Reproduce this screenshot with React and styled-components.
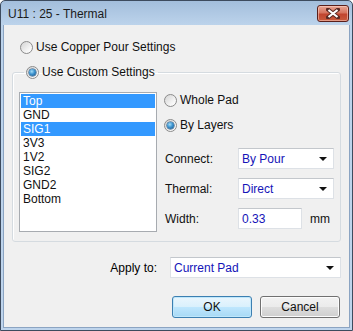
import React from "react";
import styled, { createGlobalStyle } from "styled-components";

const Global = createGlobalStyle`
  html, body { margin: 0; padding: 0; background: #ffffff; }
  body { font-family: "Liberation Sans", Arial, sans-serif; }
  * { box-sizing: border-box; }
`;

const Window = styled.div`
  width: 353px;
  height: 331px;
  border: 1px solid #3d4b5e;
  border-radius: 5px 5px 0 0;
  background: linear-gradient(#a3bedc 0px, #bcd3eb 24px, #bed4ec 100%);
  display: flex;
  flex-direction: column;
  overflow: hidden;
  font-family: "Liberation Sans", Arial, sans-serif;
  font-size: 12px;
  color: #000;
`;

const TitleBar = styled.div`
  height: 24px;
  display: flex;
  align-items: center;
  padding: 0 3px 0 7px;
  flex: none;
`;

const Title = styled.div`
  flex: 1;
  font-size: 12px;
  color: #1b1b1b;
  padding-top: 1px;
`;

const CloseButton = styled.div`
  width: 32px;
  height: 17px;
  margin-top: 1px;
  border: 1px solid #5a1f1a;
  border-radius: 3px;
  background: linear-gradient(#e8a593 0%, #d6745f 45%, #c1452f 55%, #c95a3c 100%);
  box-shadow: inset 0 0 0 1px rgba(255, 220, 210, 0.5);
  display: flex;
  align-items: center;
  justify-content: center;
`;

const Body = styled.div`
  flex: 1;
  margin: 0 2px 2px 2px;
  background: #f0f0f0;
  border: 1px solid #8ba4c2;
  border-top: none;
  display: flex;
  flex-direction: column;
  padding: 14px 8px 9px 8px;
`;

const RadioRow = styled.label`
  display: flex;
  align-items: center;
  height: 16px;
  gap: 3px;
  white-space: nowrap;
  color: #111;
  margin-left: ${(p) => p.$indent || 0}px;
`;

const RadioDot = styled.span`
  width: 13px;
  height: 13px;
  border-radius: 50%;
  border: 1px solid #8b8b8b;
  background: linear-gradient(135deg, #d4d4d4, #f6f6f6 70%, #ffffff);
  display: flex;
  align-items: center;
  justify-content: center;
  flex: none;
  &::after {
    content: "";
    display: ${(p) => (p.$checked ? "block" : "none")};
    width: 7px;
    height: 7px;
    border-radius: 50%;
    background: radial-gradient(circle at 40% 35%, #a6def8 0%, #3c93cf 45%, #174a7a 100%);
    box-shadow: 0 0 0 0.5px #1d4a74;
  }
`;

const Group = styled.fieldset`
  margin: 9px 0 0 0;
  padding: 12px 8px 9px 6px;
  border: 1px solid #d5dbe0;
  border-radius: 3px;
  box-shadow: inset 1px 1px 0 #ffffff;
  min-width: 0;
`;

const Legend = styled.legend`
  padding: 0 3px 0 2px;
  margin-left: 5px;
  line-height: 16px;
`;

const GroupInner = styled.div`
  display: flex;
  gap: 7px;
`;

const ListBox = styled.div`
  width: 138px;
  height: 140px;
  border: 1px solid #a7abb0;
  background: #fff;
  padding: 1px;
  flex: none;
`;

const ListItem = styled.div`
  height: 14px;
  line-height: 14px;
  padding-left: 2px;
  color: ${(p) => (p.$selected ? "#fff" : "#111")};
  background: ${(p) => (p.$selected ? "#3399ff" : "transparent")};
`;

const RightCol = styled.div`
  flex: 1;
  display: flex;
  flex-direction: column;
`;

const RadioStack = styled.div`
  display: flex;
  flex-direction: column;
  gap: 9px;
  margin-bottom: 15px;
`;

const FieldRow = styled.div`
  display: flex;
  align-items: center;
  height: 21px;
  margin-bottom: 9px;
  padding-left: 1px;
  &:last-child { margin-bottom: 0; }
`;

const FieldLabel = styled.span`
  width: 73px;
  flex: none;
  color: #111;
`;

const Combo = styled.div`
  width: ${(p) => p.$w}px;
  height: 21px;
  background: #fff;
  border: 1px solid #dde1e6;
  border-top-color: #c3c7cc;
  display: flex;
  align-items: center;
  padding: 0 6px 0 3px;
  color: #1414b8;
`;

const ComboText = styled.span`
  flex: 1;
`;

const Arrow = styled.span`
  width: 0;
  height: 0;
  border-left: 4px solid transparent;
  border-right: 4px solid transparent;
  border-top: 4px solid #111;
  margin-top: 1px;
`;

const Unit = styled.span`
  margin-left: 8px;
  color: #111;
`;

const ApplyRow = styled.div`
  display: flex;
  justify-content: flex-end;
  align-items: center;
  margin-top: 15px;
  gap: 13px;
`;

const ButtonRow = styled.div`
  display: flex;
  justify-content: flex-end;
  gap: 8px;
  margin-top: 18px;
  padding-right: 1px;
`;

const Button = styled.div`
  width: 80px;
  height: 22px;
  border-radius: 3px;
  border: 1px solid ${(p) => (p.$default ? "#3c7fb1" : "#707070")};
  background: ${(p) =>
    p.$default
      ? "linear-gradient(#eaf6fd 0%, #d9f0fc 50%, #bee6fd 51%, #a7d9f5 100%)"
      : "linear-gradient(#f2f2f2 0%, #ebebeb 50%, #dddddd 51%, #cfcfcf 100%)"};
  box-shadow: inset 0 0 0 1px ${(p) => (p.$default ? "#bfe7fb" : "#fcfcfc")};
  display: flex;
  align-items: center;
  justify-content: center;
  color: #111;
`;

const layers = ["Top", "GND", "SIG1", "3V3", "1V2", "SIG2", "GND2", "Bottom"];
const selected = ["Top", "SIG1"];

export default function App() {
  return (
    <>
      <Global />
      <Window>
        <TitleBar>
          <Title>U11 : 25 - Thermal</Title>
          <CloseButton>
            <svg width="14" height="11" viewBox="0 0 14 11">
              <path d="M2 1.5 L12 9.5 M12 1.5 L2 9.5" stroke="#5a2a24" strokeWidth="4" strokeLinecap="square" />
              <path d="M2.5 2 L11.5 9 M11.5 2 L2.5 9" stroke="#ffffff" strokeWidth="2.2" />
            </svg>
          </CloseButton>
        </TitleBar>
        <Body>
          <RadioRow $indent={8}>
            <RadioDot />
            Use Copper Pour Settings
          </RadioRow>
          <Group>
            <Legend>
              <RadioRow>
                <RadioDot $checked />
                Use Custom Settings
              </RadioRow>
            </Legend>
            <GroupInner>
              <ListBox>
                {layers.map((l) => (
                  <ListItem key={l} $selected={selected.includes(l)}>
                    {l}
                  </ListItem>
                ))}
              </ListBox>
              <RightCol>
                <RadioStack>
                  <RadioRow>
                    <RadioDot />
                    Whole Pad
                  </RadioRow>
                  <RadioRow>
                    <RadioDot $checked />
                    By Layers
                  </RadioRow>
                </RadioStack>
                <FieldRow>
                  <FieldLabel>Connect:</FieldLabel>
                  <Combo $w={96}>
                    <ComboText>By Pour</ComboText>
                    <Arrow />
                  </Combo>
                </FieldRow>
                <FieldRow>
                  <FieldLabel>Thermal:</FieldLabel>
                  <Combo $w={96}>
                    <ComboText>Direct</ComboText>
                    <Arrow />
                  </Combo>
                </FieldRow>
                <FieldRow>
                  <FieldLabel>Width:</FieldLabel>
                  <Combo $w={64}>
                    <ComboText>0.33</ComboText>
                  </Combo>
                  <Unit>mm</Unit>
                </FieldRow>
              </RightCol>
            </GroupInner>
          </Group>
          <ApplyRow>
            <span>Apply to:</span>
            <Combo $w={171}>
              <ComboText>Current Pad</ComboText>
              <Arrow />
            </Combo>
          </ApplyRow>
          <ButtonRow>
            <Button $default>OK</Button>
            <Button>Cancel</Button>
          </ButtonRow>
        </Body>
      </Window>
    </>
  );
}
